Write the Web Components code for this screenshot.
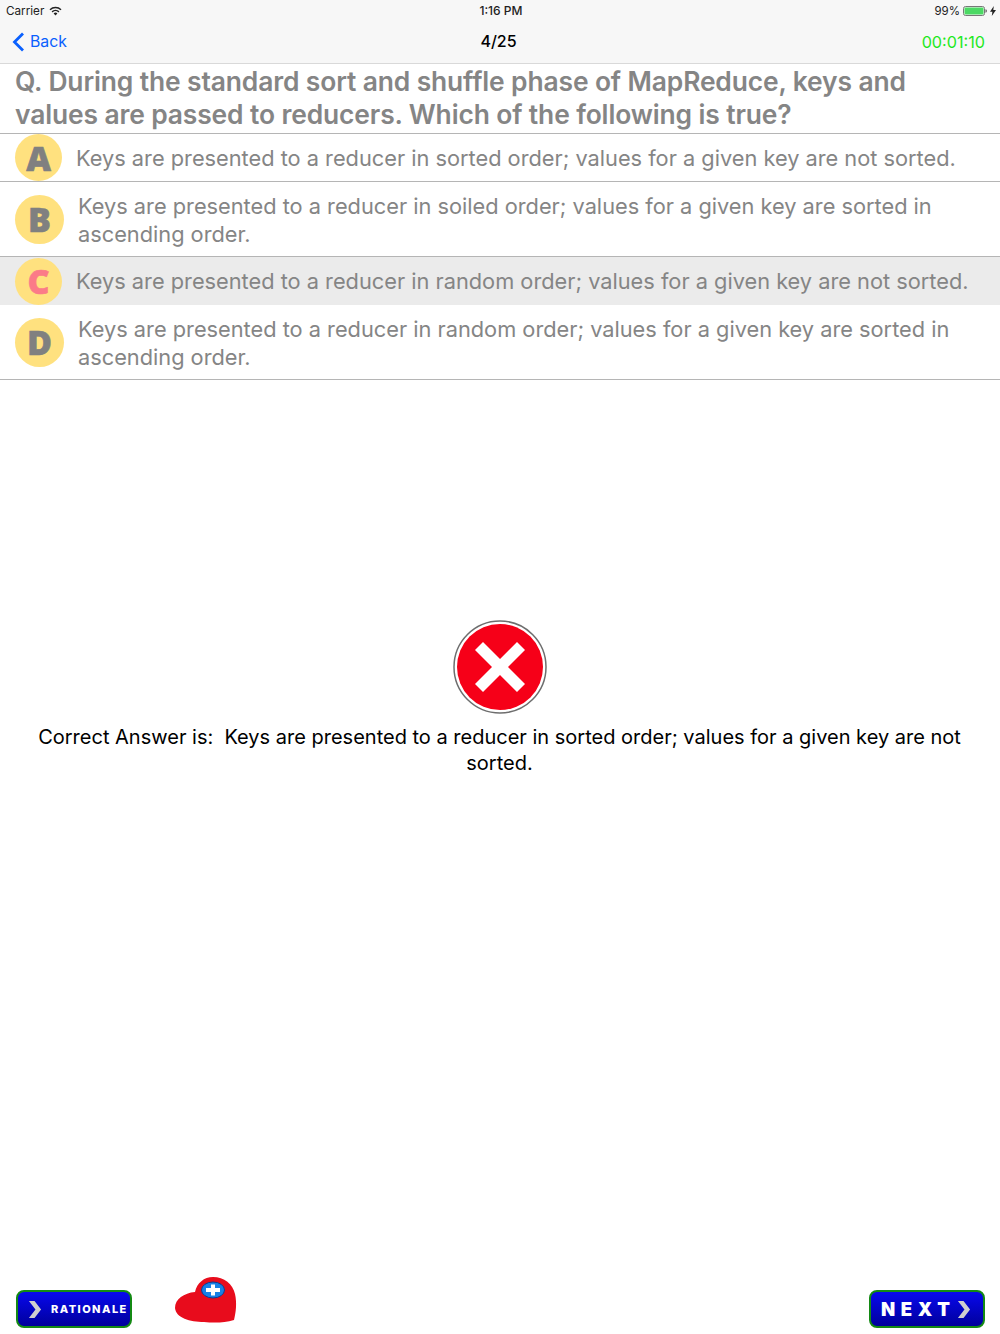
<!DOCTYPE html>
<html>
<head>
<meta charset="utf-8">
<style>
html, body { margin: 0; padding: 0; background: #fff; }
body {
  width: 1000px; height: 1334px; overflow: hidden;
  display: flex; flex-direction: column;
  font-family: Inter, "Liberation Sans", sans-serif;
}
</style>
</head>
<body>
<nav-header></nav-header>
<quiz-question>Q. During the standard sort and shuffle phase of MapReduce, keys and values are passed to reducers. Which of the following is true?</quiz-question>
<quiz-option letter="A" height="48">Keys are presented to a reducer in sorted order; values for a given key are not sorted.</quiz-option>
<quiz-option letter="B" height="75" wide>Keys are presented to a reducer in soiled order; values for a given key are sorted in ascending order.</quiz-option>
<quiz-option letter="C" height="48" selected>Keys are presented to a reducer in random order; values for a given key are not sorted.</quiz-option>
<quiz-option letter="D" height="75" wide>Keys are presented to a reducer in random order; values for a given key are sorted in ascending order.</quiz-option>
<result-panel>Correct Answer is:&nbsp; Keys are presented to a reducer in sorted order; values for a given key are not sorted.</result-panel>
<bottom-bar></bottom-bar>

<script>
customElements.define('nav-header',
  class extends HTMLElement {
    constructor() {
      super()
      this.attachShadow({ mode: 'open' })
    }

    connectedCallback() {
      this.shadowRoot.innerHTML = `
<style>
:host { display: block; height: 63px; background: #f7f7f7; border-bottom: 1px solid #d9d9d9; color: #000; flex: none; }
.status { box-sizing: border-box; height: 20px; padding: 1px 4px 0 6px; display: grid; grid-template-columns: 1fr auto 1fr; align-items: center; font-size: 11.700px; color: #222; }
.left { display: flex; align-items: center; gap: 5px; }
.right { display: flex; align-items: center; justify-content: flex-end; gap: 3px; font-size: 11.500px; }
.time { font-weight: 500; font-size: 12px; }
.bar { height: 43px; display: grid; grid-template-columns: 1fr auto 1fr; align-items: center; padding: 0 15px 0 12px; }
.back { display: flex; align-items: center; gap: 5px; color: #0a60fe; font-size: 15.800px; }
.title { font-size: 16px; font-weight: 500; padding-bottom: 2px; }
.timer { justify-self: end; color: #1fe81f; font-size: 16.200px; }
svg { display: block; }
</style>
<div class="status">
  <div class="left">Carrier
    <svg width="13" height="10" viewBox="0 0 13 10"><path d="M.5 3.200a8.600 8.600 0 0 1 12 0l-1 1.100a7.100 7.100 0 0 0-10 0z M2.600 5.300a5.600 5.600 0 0 1 7.800 0l-1 1.100a4.100 4.100 0 0 0-5.800 0z M4.600 7.400a2.700 2.700 0 0 1 3.800 0L6.500 9.400z" fill="#222"/></svg>
  </div>
  <div class="time">1:16 PM</div>
  <div class="right">99%
    <svg width="24" height="10" viewBox="0 0 24 10"><rect x=".5" y=".5" width="21" height="9" rx="2" fill="none" stroke="#777"/><rect x="1.500" y="1.500" width="19" height="7" rx="1" fill="#4cd964"/><path d="M22.500 3.300c1 .2 1.300.8 1.300 1.700s-.3 1.500-1.300 1.700z" fill="#555"/></svg>
    <svg width="6" height="10" viewBox="0 0 6 10"><path d="M3.800 0 0 5.700h2.400L1.800 10 6 3.900H3.300z" fill="#222"/></svg>
  </div>
</div>
<div class="bar">
  <div class="back">
    <svg width="13" height="20" viewBox="0 0 13 20"><path d="M11 1.500 2.500 10l8.500 8.500" fill="none" stroke="#0a60fe" stroke-width="2.800"/></svg>
    Back
  </div>
  <div class="title">4/25</div>
  <div class="timer">00:01:10</div>
</div>`
    }
  }
)

customElements.define('quiz-question',
  class extends HTMLElement {
    constructor() {
      super()
      this.attachShadow({ mode: 'open' })
    }

    connectedCallback() {
      this.shadowRoot.innerHTML = `
<style>
:host { display: block; flex: none; box-sizing: border-box; height: 70px; padding: 1px 15px 0; border-bottom: 1px solid #b5b5b5;
  color: #858585; font-size: 26.400px; font-weight: 600; line-height: 33px; letter-spacing: -.12px; }
</style>
<slot></slot>`
    }
  }
)

customElements.define('quiz-option',
  class extends HTMLElement {
    constructor() {
      super()
      this.attachShadow({ mode: 'open' })
    }

    connectedCallback() {
      const letter = this.getAttribute('letter')
      const selected = this.hasAttribute('selected')
      const wide = this.hasAttribute('wide')
      const h = this.getAttribute('height')
      const size = wide ? 49 : 47
      this.shadowRoot.innerHTML = `
<style>
:host { display: flex; flex: none; align-items: center; box-sizing: border-box; height: ${h}px;
  padding: 0 15px; gap: 14px; color: #858585; font-size: 21.780px; line-height: 27.500px;
  background: ${selected ? '#ebebeb' : '#fff'};
  ${selected ? '' : 'border-bottom: 1px solid #b5b5b5;'} }
.badge { flex: none; width: ${size}px; height: ${size}px; border-radius: 50%; background: #ffe17f;
  display: flex; align-items: center; justify-content: center;
  font-family: "Open Sans", Inter, sans-serif; font-weight: 800; font-size: 34px; line-height: 1;
  -webkit-text-stroke: .6px currentColor;
  color: ${selected ? '#fb7b88' : '#808080'}; }
.text { flex: 1; padding-top: ${wide ? 3 : 2}px; }
</style>
<div class="badge">${letter}</div>
<div class="text"><slot></slot></div>`
    }
  }
)

customElements.define('result-panel',
  class extends HTMLElement {
    constructor() {
      super()
      this.attachShadow({ mode: 'open' })
    }

    connectedCallback() {
      this.shadowRoot.innerHTML = `
<style>
:host { display: flex; flex-direction: column; align-items: center; flex: none; padding: 240px 30px 0 29px;
  color: #000; font-size: 20px; line-height: 26px; text-align: center; }
svg { display: block; margin-bottom: 10px; }
</style>
<svg width="94" height="94" viewBox="0 0 94 94">
  <circle cx="47" cy="47" r="46" fill="#fff" stroke="#6e6e6e" stroke-width="1.500"/>
  <circle cx="47" cy="47" r="43" fill="#f60018"/>
  <path d="M22 30l8-8 17 17 17-17 8 8-17 17 17 17-8 8-17-17-17 17-8-8 17-17z" fill="#fff"/>
</svg>
<div><slot></slot></div>`
    }
  }
)

customElements.define('action-button',
  class extends HTMLElement {
    constructor() {
      super()
      this.attachShadow({ mode: 'open' })
    }

    connectedCallback() {
      this.shadowRoot.innerHTML = `
<style>
:host { display: flex; align-items: center; box-sizing: border-box; width: 116px; height: 38px; padding-left: var(--pad, 10px);
  border: 2px solid #148a14; border-radius: 8px; color: #fff; font-weight: var(--weight, 900);
  background: linear-gradient(#0808ee, #00009c); gap: var(--gap, 8px); }
span { font-size: var(--size, 12px); letter-spacing: var(--track, 2.500px); white-space: nowrap; }
svg { display: block; flex: none; }
</style>
<slot name="before"></slot><span><slot></slot></span><slot name="after"></slot>`
    }
  }
)

customElements.define('bottom-bar',
  class extends HTMLElement {
    constructor() {
      super()
      this.attachShadow({ mode: 'open' })
    }

    connectedCallback() {
      const chevron = slot => `<svg slot="${slot}" width="14" height="17" viewBox="0 0 15 18"><path d="M1 0h6l7 9-7 9H1l7-9z" fill="#cfcfcf"/></svg>`
      this.shadowRoot.innerHTML = `
<style>
:host { display: flex; flex: none; align-items: flex-end; justify-content: space-between; margin-top: auto; padding: 0 15px 6px 16px; }
.left { display: flex; align-items: flex-end; gap: 43px; }
.heart { display: block; margin-bottom: 5px; }
.next { --pad: 10px; --size: 18.500px; --track: 5.600px; --gap: 1px; }
.rationale { --pad: 10px; --gap: 9px; --size: 11px; --track: 1.450px; --weight: 800; }
</style>
<div class="left">
  <action-button class="rationale">${chevron('before')}RATIONALE</action-button>
  <svg class="heart" width="62" height="46" viewBox="0 0 62 46">
    <path d="M20 15C22 6 29 0 38 0c11 0 20 7 22 17 2 9 1 18-1 26-10 3-20 3-30 2C15 45 1 41 0 31c0-9 9-15 20-16z" fill="#e80c1c"/>
    <ellipse cx="38" cy="13" rx="11.500" ry="8" fill="#1680e6" stroke="#123a8a"/>
    <path d="M36 7.500h4V11h5v4h-5v3.500h-4V15h-5v-4h5z" fill="#fff"/>
  </svg>
</div>
<action-button class="next">NEXT${chevron('after')}</action-button>`
    }
  }
)
</script>
</body>
</html>
